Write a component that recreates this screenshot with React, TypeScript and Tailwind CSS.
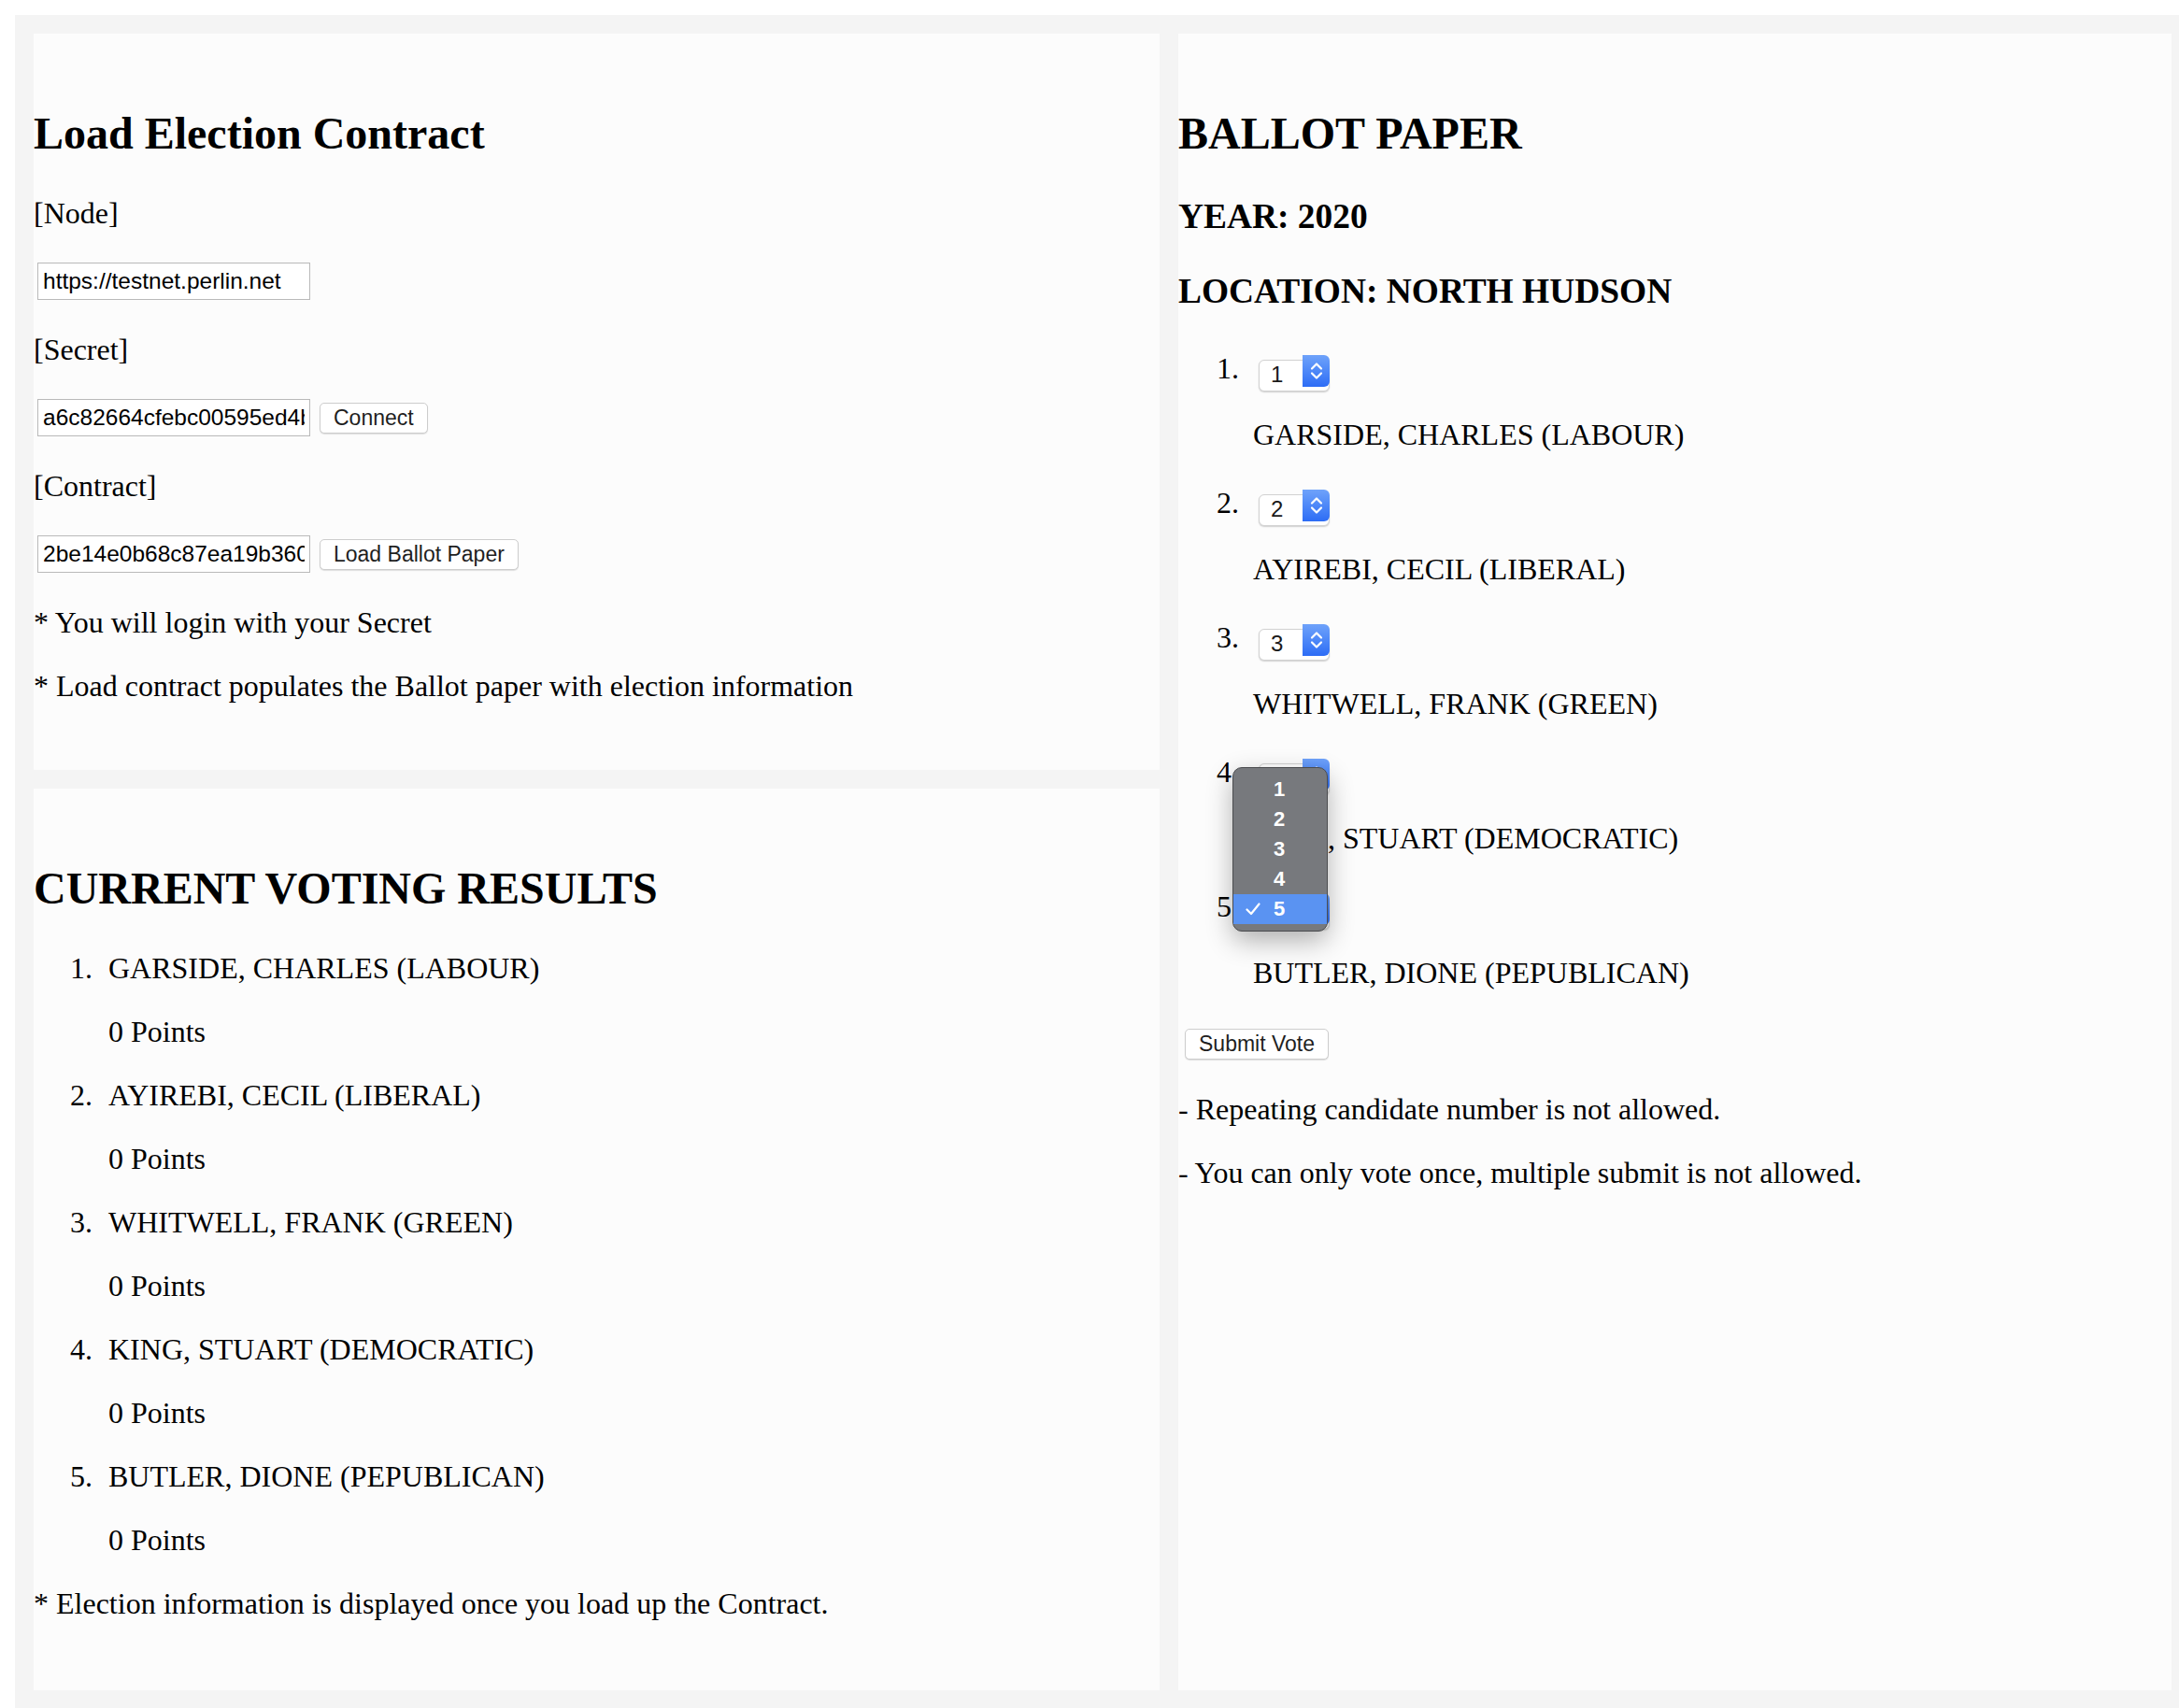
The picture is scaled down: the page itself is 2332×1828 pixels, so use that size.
import React from "react";

type Candidate = {
  name: string;
  points: number;
};

const candidates: Candidate[] = [
  { name: "GARSIDE, CHARLES (LABOUR)", points: 0 },
  { name: "AYIREBI, CECIL (LIBERAL)", points: 0 },
  { name: "WHITWELL, FRANK (GREEN)", points: 0 },
  { name: "KING, STUART (DEMOCRATIC)", points: 0 },
  { name: "BUTLER, DIONE (PEPUBLICAN)", points: 0 },
];

const sans = "font-['Liberation_Sans',Arial,sans-serif]";

const Button: React.FC<{ label: string; className?: string }> = ({ label, className = "" }) => (
  <button
    type="button"
    className={`h-[33px] shrink-0 rounded-[5px] border border-[#cdcdcd] bg-white px-[14px] text-[23px] leading-none text-[#1f1f1f] shadow-[0_1px_1px_rgba(0,0,0,0.12)] ${sans} ${className}`}
  >
    {label}
  </button>
);

const Field: React.FC<{ value: string; action?: string }> = ({ value, action }) => (
  <div className="flex h-[46px] items-center gap-[10px] pl-[4px]">
    <input
      defaultValue={value}
      className={`h-[40px] w-[292px] shrink-0 border border-[#b9b9b9] bg-white px-[5px] text-[24.5px] text-black outline-none ${sans}`}
    />
    {action && <Button label={action} />}
  </div>
);

const Chevrons = () => (
  <svg width="14" height="20" viewBox="0 0 14 20" fill="none">
    <path d="M2 7.5 L7 2.5 L12 7.5" stroke="white" strokeWidth="2.2" strokeLinecap="round" strokeLinejoin="round" />
    <path d="M2 12.5 L7 17.5 L12 12.5" stroke="white" strokeWidth="2.2" strokeLinecap="round" strokeLinejoin="round" />
  </svg>
);

const CheckMark = () => (
  <svg width="16" height="14" viewBox="0 0 16 14" fill="none">
    <path d="M1.5 7.5 L6 12 L14.5 1.5" stroke="white" strokeWidth="2.2" strokeLinecap="round" strokeLinejoin="round" />
  </svg>
);

const OpenMenu = () => (
  <div className="absolute left-[-28px] top-[9px] z-10 w-[102px] rounded-[10px] border border-[#4b4c4f] bg-[#77797d] py-[7px] shadow-[0_10px_28px_rgba(0,0,0,0.3)]">
    {[1, 2, 3, 4, 5].map((n) => (
      <div
        key={n}
        className={`flex h-[32px] items-center pl-[13px] text-[22px] font-bold text-white ${sans} ${
          n === 5 ? "bg-[#5a93f2]" : ""
        }`}
      >
        <span className="flex w-[30px] items-center">{n === 5 && <CheckMark />}</span>
        <span>{n}</span>
      </div>
    ))}
  </div>
);

const RankSelect: React.FC<{ value: number; open?: boolean }> = ({ value, open }) => (
  <div className="relative ml-[6px] h-[34px] w-[76px]">
    <select
      defaultValue={value}
      className={`h-full w-full appearance-none rounded-[6px] border border-[#d2d2d2] bg-white pb-[3px] pt-0 pl-[12px] text-[24px] leading-[28px] text-[#1a1a1a] shadow-[0_1px_1.5px_rgba(0,0,0,0.18)] outline-none ${sans}`}
    >
      {[1, 2, 3, 4, 5].map((n) => (
        <option key={n} value={n}>
          {n}
        </option>
      ))}
    </select>
    <div className="pointer-events-none absolute bottom-0 right-0 top-0 flex w-[29px] items-center justify-center rounded-r-[6px] bg-linear-to-b from-[#6fa2fa] to-[#2d6cf5]">
      <Chevrons />
    </div>
    {open && <OpenMenu />}
  </div>
);

const Card: React.FC<{ children: React.ReactNode; className?: string }> = ({ children, className = "" }) => (
  <section className={`bg-[#fcfcfc] py-[40px] ${className}`}>{children}</section>
);

const LoadContract = () => (
  <Card>
    <h2 className="my-[40px] text-[48px] font-bold leading-[54px]">Load Election Contract</h2>
    <p className="my-[32px]">[Node]</p>
    <Field value="https://testnet.perlin.net" />
    <p className="my-[32px]">[Secret]</p>
    <Field value="a6c82664cfebc00595ed4b2c8e1e8f3a90d7" action="Connect" />
    <p className="my-[32px]">[Contract]</p>
    <Field value="2be14e0b68c87ea19b3607f2d1a1c7e5d2b4" action="Load Ballot Paper" />
    <p className="my-[32px]">* You will login with your Secret</p>
    <p className="my-[32px]">* Load contract populates the Ballot paper with election information</p>
  </Card>
);

const VotingResults = () => (
  <Card className="flex-1">
    <h2 className="mb-[40px] mt-[40px] text-[48px] font-bold leading-[54px]">CURRENT VOTING RESULTS</h2>
    <ol>
      {candidates.map((c, i) => (
        <li key={c.name} className="flex">
          <span className="w-[80px] shrink-0 pr-[17px] text-right">{i + 1}.</span>
          <div>
            <div>{c.name}</div>
            <p className="my-[32px]">{c.points} Points</p>
          </div>
        </li>
      ))}
    </ol>
    <p className="mb-[32px]">* Election information is displayed once you load up the Contract.</p>
  </Card>
);

const BallotPaper = () => (
  <Card className="flex-1">
    <h2 className="my-[40px] text-[48px] font-bold leading-[54px]">BALLOT PAPER</h2>
    <h3 className="my-[37.44px] text-[37.44px] font-bold leading-[43px]">YEAR: 2020</h3>
    <h3 className="my-[37.44px] text-[37.44px] font-bold leading-[43px]">LOCATION: NORTH HUDSON</h3>
    <ol>
      {candidates.map((c, i) => (
        <li key={c.name} className="flex">
          <span className="w-[80px] shrink-0 pr-[15px] pt-[5px] text-right">{i + 1}.</span>
          <div>
            <div className="h-[44px] pt-[9px]">
              <RankSelect value={i + 1} open={i === 3} />
            </div>
            <p className="my-[32px]">{c.name}</p>
          </div>
        </li>
      ))}
    </ol>
    <div className="h-[46px] pl-[7px] pt-[5px]">
      <Button label="Submit Vote" className="h-[32px]" />
    </div>
    <p className="my-[32px]">- Repeating candidate number is not allowed.</p>
    <p className="my-[32px]">- You can only vote once, multiple submit is not allowed.</p>
  </Card>
);

export default function App() {
  return (
    <div className="h-[1828px] overflow-hidden bg-white pl-[16px] pt-[16px] font-['Liberation_Serif','Times_New_Roman',serif] text-[32px] leading-[36px] text-black">
      <div className="flex min-h-[1813px] gap-[20px] bg-[#f4f4f4] py-[20px] pl-[20px] pr-[8px]">
        <div className="flex w-[1205px] shrink-0 flex-col gap-[20px]">
          <LoadContract />
          <VotingResults />
        </div>
        <BallotPaper />
      </div>
    </div>
  );
}
